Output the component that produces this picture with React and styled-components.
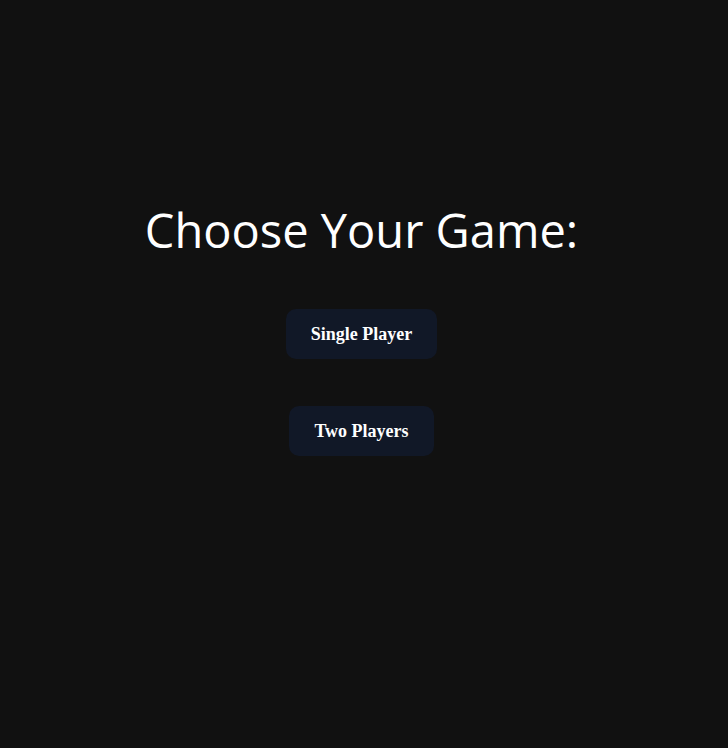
import React from 'react'
import styled, { createGlobalStyle } from 'styled-components'

const GlobalStyle = createGlobalStyle`
  html, body {
    margin: 0;
    padding: 0;
    background: #111111;
  }
`

const Page = styled.div`
  min-height: 100vh;
  box-sizing: border-box;
  padding: 198px 5px 0 0;
  display: flex;
  flex-direction: column;
  align-items: center;
  background: #111111;
  color: #ffffff;
`

const Title = styled.h1`
  margin: 0 0 47px;
  font-family: 'Open Sans', 'Noto Sans', sans-serif;
  font-weight: 400;
  font-size: 47px;
  line-height: 64px;
`

const Menu = styled.div`
  display: flex;
  flex-direction: column;
  align-items: center;
  gap: 47px;
`

const Button = styled.button`
  height: 50px;
  padding: 0 25px;
  border: none;
  border-radius: 10px;
  background: #111827;
  color: #ffffff;
  font-family: 'Liberation Serif', 'Times New Roman', serif;
  font-weight: 700;
  font-size: 18px;
  cursor: pointer;
`

function App() {
  return (
    <>
      <GlobalStyle />
      <Page>
        <Title>Choose Your Game:</Title>
        <Menu>
          <Button>Single Player</Button>
          <Button>Two Players</Button>
        </Menu>
      </Page>
    </>
  )
}

export default App
